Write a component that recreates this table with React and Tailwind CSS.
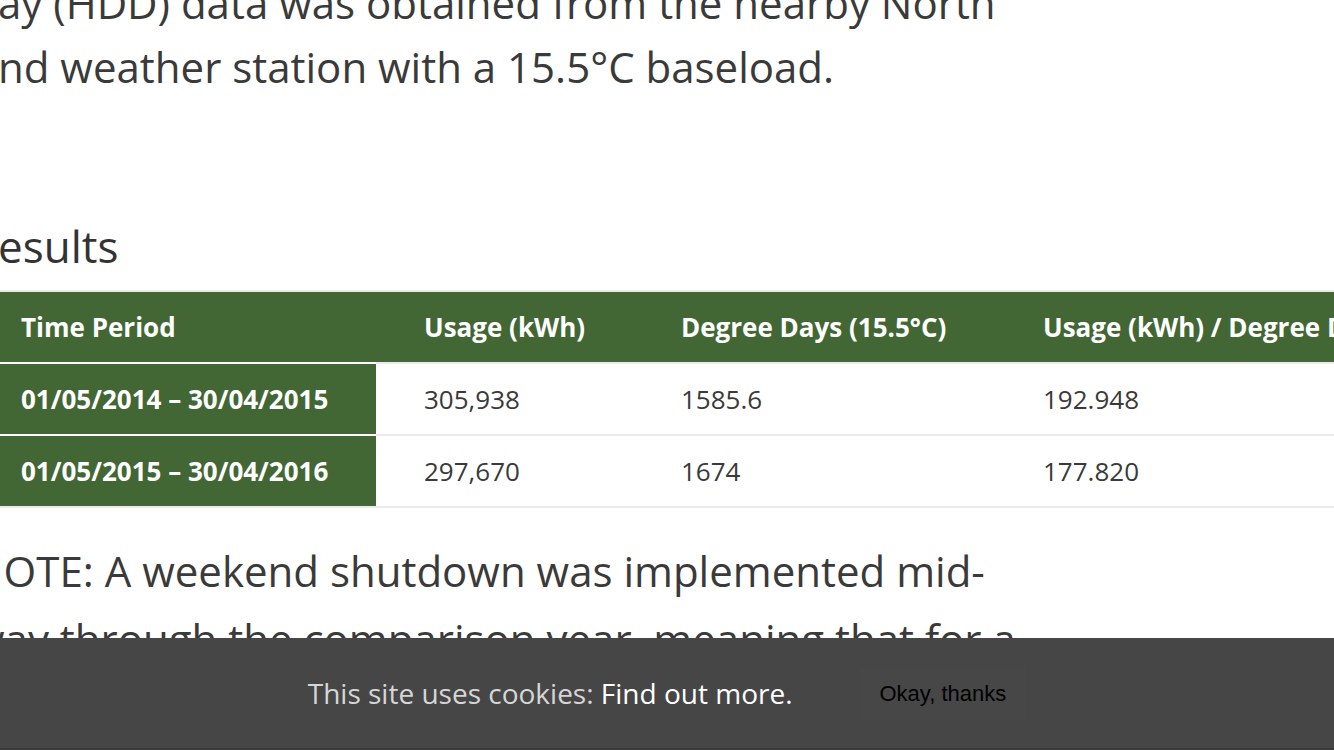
export default function App() {
  const rows = [
    ["01/05/2014 – 30/04/2015", "305,938", "1585.6", "192.948"],
    ["01/05/2015 – 30/04/2016", "297,670", "1674", "177.820"],
  ];

  return (
    <div className="relative h-[750px] w-full overflow-hidden bg-white font-['Open_Sans',sans-serif]">
      {/* Article text */}
      <div className="-mt-[29px] whitespace-nowrap text-[42px] leading-[64px] text-[#3a3a3a]">
        <p className="-ml-[2px]">ay (HDD) data was obtained from the nearby North</p>
        <p className="-ml-[2px]">nd weather station with a 15.5°C baseload.</p>
      </div>

      <h2 className="mt-[119px] -ml-[2px] whitespace-nowrap text-[44px] leading-[56px] text-[#333]">
        esults
      </h2>

      {/* Results table */}
      <table className="mt-[16px] -ml-[27px] w-[1500px] table-fixed border-collapse border-t-2 border-b-2 border-[#ebebeb] text-left text-[26px]">
        <colgroup>
          <col className="w-[403px]" />
          <col className="w-[257px]" />
          <col className="w-[362px]" />
          <col />
        </colgroup>
        <thead>
          <tr className="bg-[#426734] text-white">
            <th className="h-[72px] pl-[48px] font-bold">Time Period</th>
            <th className="pl-[48px] font-bold">Usage (kWh)</th>
            <th className="pl-[48px] font-bold">Degree Days (15.5°C)</th>
            <th className="whitespace-nowrap pl-[48px] font-bold">Usage (kWh) / Degree Day</th>
          </tr>
        </thead>
        <tbody>
          {rows.map((r) => (
            <tr key={r[0]} className="border-t-2 border-[#ebebeb]">
              <th className="h-[72px] border-t-2 border-white bg-[#426734] pl-[48px] font-bold text-white">
                {r[0]}
              </th>
              <td className="pl-[48px] text-[#3a3a3a]">{r[1]}</td>
              <td className="pl-[48px] text-[#3a3a3a]">{r[2]}</td>
              <td className="pl-[48px] text-[#3a3a3a]">{r[3]}</td>
            </tr>
          ))}
        </tbody>
      </table>

      <div className="mt-[29px] whitespace-nowrap text-[42px] leading-[68px] text-[#3a3a3a]">
        <p className="-ml-[28px]">NOTE: A weekend shutdown was implemented mid-</p>
        <p className="-ml-[28px]">way through the comparison year, meaning that for a</p>
      </div>

      {/* Cookie banner */}
      <div className="absolute inset-x-0 bottom-0 flex h-[112px] items-center justify-center border-b-2 border-[#3a3a3a] bg-[#464646]">
        <p className="text-[28px] text-[#d6d6d6]">
          This site uses cookies: <a className="text-white">Find out more.</a>
        </p>
        <button className="ml-[67px] h-[52px] bg-[#474747] px-[20px] font-['Liberation_Sans',Arial,sans-serif] text-[22px] text-black">
          Okay, thanks
        </button>
      </div>
    </div>
  );
}
